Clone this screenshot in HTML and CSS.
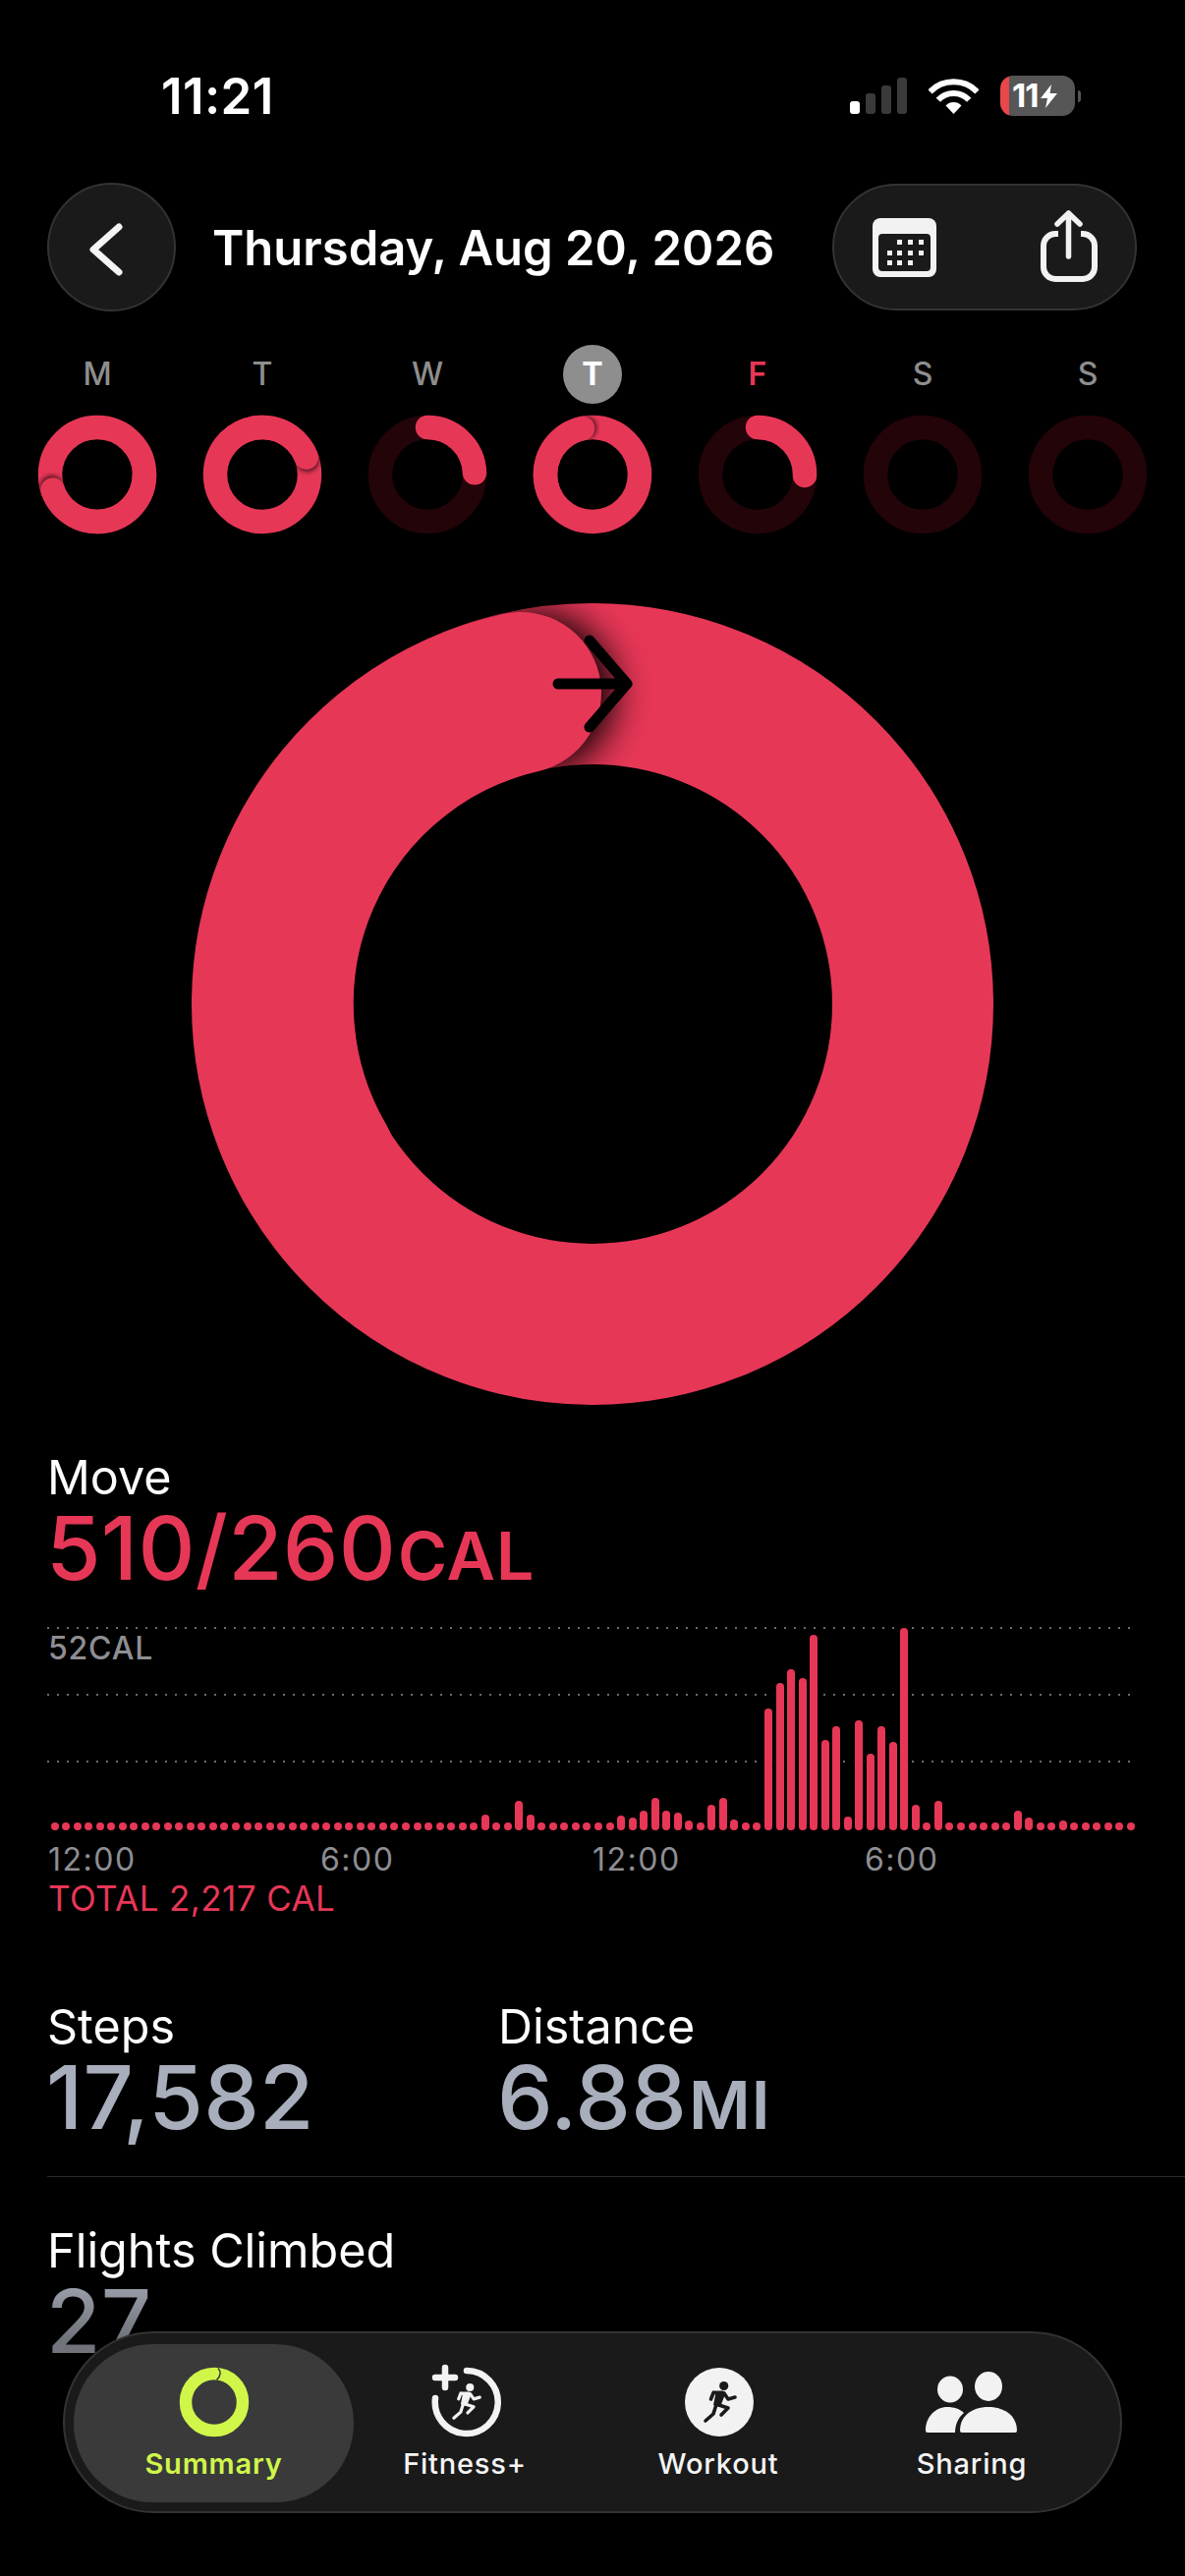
FILE: index.html
```html
<!DOCTYPE html>
<html lang="en">
<head>
<meta charset="utf-8">
<title>Activity Summary</title>
<link rel="stylesheet" href="styles.css">
</head>
<body>
<svg class="defs" width="0" height="0" aria-hidden="true">
  <defs>
    <clipPath id="smallClip"><path clip-rule="evenodd" d="M61 .75a60.25 60.25 0 1 0 0 120.5a60.25 60.25 0 1 0 0-120.5zM61 25a36 36 0 1 1 0 72a36 36 0 1 1 0-72z"/></clipPath>
    <clipPath id="bigClip"><path clip-rule="evenodd" d="M408 0a408 408 0 1 0 0 816a408 408 0 1 0 0-816zM408 164a244 244 0 1 1 0 488a244 244 0 1 1 0-488z"/></clipPath>
    <filter id="blurS" x="-50%" y="-50%" width="200%" height="200%"><feGaussianBlur stdDeviation="2"/></filter>
    <filter id="blurB" x="-50%" y="-50%" width="200%" height="200%"><feGaussianBlur stdDeviation="18"/></filter>
    <g id="runner">
      <circle class="head" cx="46.7" cy="28.5" r="4.6"/>
      <path class="torso" d="M35 33.5H46L48 37L43 50L36 48L38 38Z"/>
      <path class="limb" d="M36 35.5L33.5 42M47 36L51 42L58 40M40 47.5L51 51L44 58M38.5 49L36 57L28 64"/>
    </g>
  </defs>
</svg>

<div class="status">
  <span class="time">11:21</span>
  <div class="status-icons">
    <svg class="signal" width="58" height="37" viewBox="0 0 58 37">
      <rect class="on" x="0" y="24" width="10" height="13" rx="3"/>
      <rect class="off" x="16" y="16" width="10" height="21" rx="3"/>
      <rect class="off" x="32" y="8" width="10" height="29" rx="3"/>
      <rect class="off" x="48" y="0" width="10" height="37" rx="3"/>
    </svg>
    <svg class="wifi" width="51" height="37" viewBox="0 0 51 37">
      <path d="M1.5 14.5A33.500 33.500 0 0 1 49.500 14.500M9.800 22.800A21.500 21.500 0 0 1 41.200 22.800"/>
      <path class="wedge" d="M25.500 37L17.500 28.500A11 11 0 0 1 33.500 28.500Z"/>
    </svg>
    <div class="battery-wrap">
      <div class="battery">
        <span class="batt-num">11</span>
        <svg width="17" height="24" viewBox="0 0 17 24"><path class="bolt" d="M11 0L0 14H7L5 24L17 9H9.500Z"/></svg>
      </div>
      <span class="nub"></span>
    </div>
  </div>
</div>

<nav class="nav">
  <button class="back">
    <svg width="131" height="131" viewBox="0 0 131 131"><path class="stroke-icon back-chev" d="M73 45L47 68L73 91"/></svg>
  </button>
  <h1 class="title">Thursday, Aug 20, 2026</h1>
  <div class="actions">
    <svg class="cal" width="65" height="60" viewBox="0 0 65 60">
      <rect class="cal-body" width="65" height="60" rx="8"/>
      <rect class="cal-win" x="6" y="16" width="53" height="38" rx="4"/>
      <g class="cal-dots">
        <rect x="25" y="22" width="5" height="5"/><rect x="36" y="22" width="5" height="5"/><rect x="47" y="22" width="5" height="5"/>
        <rect x="15" y="33" width="5" height="5"/><rect x="25" y="33" width="5" height="5"/><rect x="36" y="33" width="5" height="5"/><rect x="47" y="33" width="5" height="5"/>
        <rect x="15" y="43" width="5" height="5"/><rect x="25" y="43" width="5" height="5"/><rect x="36" y="43" width="5" height="5"/>
      </g>
    </svg>
    <svg class="share" width="58" height="73" viewBox="0 0 58 73">
      <path class="share-box" d="M18 24H15A12 12 0 0 0 3 36V58A12 12 0 0 0 15 70H43A12 12 0 0 0 55 58V36A12 12 0 0 0 43 24H41"/>
      <path class="share-arrow" d="M28.500 47V3M17 14L28.500 3L40 14"/>
    </svg>
  </div>
</nav>

<div class="days">
  <div class="day"><span class="day-label">M</span>
    <svg class="mini" width="122" height="122" viewBox="0 0 122 122">
      <circle class="ring-full" cx="61" cy="61" r="48"/>
      <g clip-path="url(#smallClip)"><circle class="shade" cx="14.600" cy="73.800" r="12" filter="url(#blurS)"/></g>
      <path class="ring-arc" d="M109 61A48 48 0 0 1 15.600 76.600"/>
    </svg>
  </div>
  <div class="day"><span class="day-label">T</span>
    <svg class="mini" width="122" height="122" viewBox="0 0 122 122">
      <circle class="ring-full" cx="61" cy="61" r="48"/>
      <g clip-path="url(#smallClip)"><circle class="shade" cx="106.800" cy="46.300" r="12" filter="url(#blurS)"/></g>
      <path class="ring-arc" d="M19.400 37A48 48 0 0 1 105.700 43.500"/>
    </svg>
  </div>
  <div class="day"><span class="day-label">W</span>
    <svg class="mini" width="122" height="122" viewBox="0 0 122 122">
      <circle class="ring-dim" cx="61" cy="61" r="48"/>
      <path class="ring-arc" d="M61 13A48 48 0 0 1 109 59.300"/>
    </svg>
  </div>
  <div class="day"><span class="day-label today">T</span>
    <svg class="mini" width="122" height="122" viewBox="0 0 122 122">
      <circle class="ring-full" cx="61" cy="61" r="48"/>
      <g clip-path="url(#smallClip)"><circle class="shade" cx="53.500" cy="13.400" r="12" filter="url(#blurS)"/></g>
      <path class="ring-arc" d="M19.400 85A48 48 0 0 1 51 14"/>
    </svg>
  </div>
  <div class="day"><span class="day-label next">F</span>
    <svg class="mini" width="122" height="122" viewBox="0 0 122 122">
      <circle class="ring-dim" cx="61" cy="61" r="48"/>
      <path class="ring-arc" d="M61 13A48 48 0 0 1 109 62"/>
    </svg>
  </div>
  <div class="day"><span class="day-label">S</span>
    <svg class="mini" width="122" height="122" viewBox="0 0 122 122"><circle class="ring-dim" cx="61" cy="61" r="48"/></svg>
  </div>
  <div class="day"><span class="day-label">S</span>
    <svg class="mini" width="122" height="122" viewBox="0 0 122 122"><circle class="ring-dim" cx="61" cy="61" r="48"/></svg>
  </div>
</div>

<svg class="big-ring" width="816" height="816" viewBox="0 0 816 816">
  <circle class="big-full" cx="408" cy="408" r="326"/>
  <g clip-path="url(#bigClip)"><circle class="shade big-shade" cx="349" cy="91" r="82" filter="url(#blurB)"/></g>
  <path class="big-arc" d="M126.500 570.500A325 325 0 0 1 335 91"/>
  <path class="big-arrow" d="M373 82H443M405 38L443 82L405 126"/>
</svg>

<section class="move">
  <div class="label">Move</div>
  <div class="value move-value">510/260<span class="unit">CAL</span></div>
  <div class="chart">
    <div class="row first"><span class="peak">52CAL</span></div>
    <div class="row"></div>
    <div class="row"></div>
    <div class="bars">
      <i></i><i></i><i></i><i></i><i></i><i></i><i></i><i></i><i></i><i></i><i></i><i></i>
      <i></i><i></i><i></i><i></i><i></i><i></i><i></i><i></i><i></i><i></i><i></i><i></i>
      <i></i><i></i><i></i><i></i><i></i><i></i><i></i><i></i><i></i><i></i><i></i><i></i>
      <i></i><i></i><i style="height:16px"></i><i></i><i></i><i style="height:30px"></i><i style="height:16px"></i><i></i><i></i><i></i><i></i><i></i>
      <i></i><i></i><i style="height:15px"></i><i style="height:13px"></i><i style="height:20px"></i><i style="height:33px"></i><i style="height:20px"></i><i style="height:18px"></i><i style="height:10px"></i><i></i>
      <i style="height:26px"></i><i style="height:33px"></i><i style="height:11px"></i><i></i><i></i>
      <i style="height:124px"></i><i style="height:150px"></i><i style="height:164px"></i><i style="height:155px"></i><i style="height:199px"></i><i style="height:92px"></i><i style="height:106px"></i><i style="height:14px"></i><i style="height:112px"></i><i style="height:78px"></i><i style="height:106px"></i><i style="height:90px"></i><i style="height:206px"></i>
      <i style="height:26px"></i><i></i><i style="height:30px"></i><i></i><i></i><i></i><i></i><i></i><i></i>
      <i style="height:20px"></i><i style="height:13px"></i><i></i><i></i><i style="height:10px"></i><i></i><i></i><i></i><i></i><i></i><i></i>
    </div>
  </div>
  <div class="axis"><span>12:00</span><span>6:00</span><span>12:00</span><span>6:00</span></div>
  <div class="total">TOTAL 2,217 CAL</div>
</section>

<section class="stats">
  <div class="stat steps">
    <div class="label">Steps</div>
    <div class="value grey">17,582</div>
  </div>
  <div class="stat">
    <div class="label">Distance</div>
    <div class="value grey">6.88<span class="unit">MI</span></div>
  </div>
</section>
<hr class="divider">
<section class="flights">
  <div class="label">Flights Climbed</div>
  <div class="value fade">27</div>
</section>

<nav class="tabbar">
  <div class="tab active">
    <svg class="tab-icon" width="90" height="90" viewBox="0 0 90 90">
      <circle class="lime-ring" cx="45" cy="45" r="29"/>
      <path class="lime-notch" d="M49 10.500Q54 16 47.500 22.500"/>
    </svg>
    <span class="tab-label">Summary</span>
  </div>
  <div class="tab">
    <svg class="tab-icon" width="90" height="90" viewBox="0 0 90 90">
      <path class="fit-ring" d="M47 13A32 32 0 1 1 15 41M15 20H35M25 10V30"/>
      <use class="run-light" href="#runner" transform="translate(50.300 30) scale(.88) translate(-46.700 -28.500)"/>
    </svg>
    <span class="tab-label">Fitness+</span>
  </div>
  <div class="tab">
    <svg class="tab-icon" width="90" height="90" viewBox="0 0 90 90">
      <circle class="disc" cx="46" cy="45" r="35"/>
      <use class="run-dark" href="#runner" transform="translate(4 0)"/>
    </svg>
    <span class="tab-label">Workout</span>
  </div>
  <div class="tab">
    <svg class="tab-icon" width="90" height="90" viewBox="0 0 90 90">
      <ellipse class="disc" cx="23" cy="32" rx="13" ry="13.500"/>
      <ellipse class="disc" cx="62" cy="29" rx="14" ry="15"/>
      <path class="disc" d="M-2 74C-2 60 8 50 20 50C27 50 33 52 37 56C31 61 28 68 28 76H0Q-2 76 -2 74Z"/>
      <path class="disc" d="M33 74C33 60 44 50 62 50S91 60 91 74Q91 76 89 76H35Q33 76 33 74Z"/>
    </svg>
    <span class="tab-label">Sharing</span>
  </div>
</nav>
</body>
</html>
```
FILE: styles.css
```css
* { box-sizing: border-box; }
html, body { margin: 0; padding: 0; background: #000; }
body {
  width: 1206px;
  height: 2622px;
  overflow: hidden;
  position: relative;
  font-family: "Inter", "Liberation Sans", sans-serif;
  color: #fff;
}
.defs { position: absolute; }

/* status bar */
.status {
  height: 186px;
  padding: 68px 106px 0 164px;
  display: flex;
  justify-content: space-between;
  align-items: flex-start;
}
.time { font-size: 51px; line-height: 60px; font-weight: 600; letter-spacing: .4px; }
.status-icons { display: flex; align-items: center; gap: 22px; margin-top: 9px; height: 41px; }
.signal .on { fill: #fff; }
.signal .off { fill: #3a3a3a; }
.wifi path { fill: none; stroke: #fff; stroke-width: 6; }
.wifi .wedge { fill: #fff; stroke: none; }
.battery-wrap { display: flex; align-items: center; gap: 3px; }
.battery {
  width: 76px;
  height: 41px;
  border-radius: 13px;
  background: linear-gradient(90deg, #e8474c 9px, #565656 9px);
  display: flex;
  align-items: center;
  padding-left: 12px;
  gap: 3px;
}
.batt-num { font-size: 33px; line-height: 41px; font-weight: 700; letter-spacing: -1px; }
.bolt { fill: #fff; }
.nub { width: 3px; height: 12px; border-radius: 0 3px 3px 0; background: #565656; }

/* nav */
.nav { display: flex; align-items: center; height: 131px; padding: 0 49px 0 48px; }
.back {
  width: 131px;
  height: 131px;
  padding: 0;
  border-radius: 50%;
  background: #1a1a1a;
  border: 2px solid #333;
  flex: none;
}
.back svg { display: block; margin: -2px; }
.stroke-icon { fill: none; stroke: #f4f4f4; stroke-width: 7; stroke-linecap: round; stroke-linejoin: round; }
.title {
  margin: 3px 0 0 37px;
  flex: 1;
  font-size: 49px;
  line-height: 60px;
  font-weight: 600;
  letter-spacing: 0;
  white-space: nowrap;
}
.actions {
  width: 310px;
  height: 129px;
  border-radius: 65px;
  background: #1a1a1a;
  border: 2px solid #333;
  display: flex;
  align-items: center;
  padding-left: 39px;
  gap: 106px;
}
.cal-body { fill: #f2f2f2; }
.cal-win { fill: #1a1a1a; }
.cal-dots rect { fill: #f2f2f2; }
.share { margin-top: -2px; }
.share-box { fill: none; stroke: #f2f2f2; stroke-width: 6; stroke-linecap: butt; }
.share-arrow { fill: none; stroke: #f2f2f2; stroke-width: 5.500; stroke-linecap: round; stroke-linejoin: round; }

/* week */
.days {
  display: grid;
  grid-template-columns: repeat(7, 168px);
  margin-top: 34px;
  padding-left: 15px;
}
.day { display: flex; flex-direction: column; align-items: center; gap: 10.500px; }
.day-label {
  width: 60px;
  height: 60px;
  padding-bottom: 2px;
  border-radius: 50%;
  display: flex;
  align-items: center;
  justify-content: center;
  font-size: 32px;
  font-weight: 500;
  color: #8e8e8e;
}
.day-label.today { background: #8e8e8e; color: #fff; font-weight: 700; }
.day-label.next { color: #e73757; font-weight: 600; }
.mini { display: block; }
.ring-full, .ring-dim, .ring-arc { fill: none; stroke-width: 24.500; }
.ring-full { stroke: #e73757; }
.ring-dim { stroke: #230409; }
.ring-arc { stroke: #e73757; stroke-linecap: round; }
.shade { fill: #000; opacity: .6; }

/* big ring */
.big-ring { display: block; margin: 70.500px auto 0; }
.big-full { fill: none; stroke: #e73757; stroke-width: 164; }
.big-shade { opacity: .95; }
.big-arc { fill: none; stroke: #e73757; stroke-width: 164; stroke-linecap: round; }
.big-arrow { fill: none; stroke: #000; stroke-width: 11; stroke-linecap: round; stroke-linejoin: round; }

/* metrics */
.label { font-size: 48.500px; line-height: 58px; font-weight: 400; letter-spacing: 0; color: #fff; }
.value { font-size: 90px; line-height: 90px; font-weight: 500; letter-spacing: .2px; margin: -2px 0 0 -1px; white-space: nowrap; }
.unit { font-size: 68px; line-height: 1; font-weight: 600; letter-spacing: 1px; margin-left: 2px; }
.move { margin-top: 44.500px; padding-left: 48px; }
.move-value { color: #e73757; }
.grey { color: #a8aebb; }
.fade {
  background: linear-gradient(180deg, #a0a5b0 0%, #70737b 70%);
  -webkit-background-clip: text;
  background-clip: text;
  color: transparent;
}

.chart { position: relative; margin: 35.400px 0 0 0; width: 1103px; height: 207px; }
.row {
  height: 68px;
  background: repeating-linear-gradient(90deg, #6c6c6c 0 2px, transparent 2px 10px) top left / 100% 2px no-repeat;
}
.peak {
  display: block;
  padding: 3px 0 0 1px;
  font-size: 32px;
  line-height: 38px;
  font-weight: 500;
  letter-spacing: .8px;
  color: #8e8e93;
}
.bars {
  position: absolute;
  left: 3.500px;
  right: -4px;
  bottom: 0;
  display: flex;
  justify-content: space-between;
  align-items: flex-end;
}
.bars i {
  display: block;
  width: 8px;
  height: 8px;
  border-radius: 4px;
  background: #e73757;
  box-shadow: 0 0 0 1.800px #000;
}
.axis {
  display: grid;
  grid-template-columns: repeat(4, 277px);
  margin: 11.400px 0 0 1px;
  font-size: 32px;
  line-height: 38px;
  letter-spacing: 1.500px;
  color: #8e8e93;
}
.total {
  margin: 1px 0 0 1px;
  font-size: 35px;
  line-height: 38px;
  letter-spacing: .4px;
  color: #e73757;
}

.stats { display: flex; margin-top: 83px; padding-left: 48px; }
.stat { width: 459px; }
.divider { border: 0; height: 1px; background: #2a2a2a; margin: 35px 0 0 48px; }
.flights { margin-top: 45.500px; padding-left: 48px; }

/* tab bar */
.tabbar {
  position: absolute;
  left: 64px;
  top: 2373px;
  width: 1078px;
  height: 185px;
  border-radius: 92.500px;
  background: #1a1a1a;
  border: 2px solid #333;
  display: flex;
  align-items: flex-start;
  gap: 58px;
  padding: 11px 0 0 9px;
}
.tab {
  width: 200px;
  height: 161px;
  display: flex;
  flex-direction: column;
  align-items: center;
  padding-top: 14px;
}
.tab.active { width: 285px; margin-right: -45px; border-radius: 80px; background: #3a3a3a; }
.tab-icon { display: block; overflow: visible; flex: none; }
.tab-label { font-size: 29px; line-height: 34px; font-weight: 500; letter-spacing: .8px; margin-top: .500px; color: #f4f4f4; }
.active .tab-label { color: #d0f64a; font-weight: 600; }
.lime-ring { fill: none; stroke: #d0f64a; stroke-width: 12.500; }
.lime-notch { fill: none; stroke: #3a3a3a; stroke-width: 1.500; }
.fit-ring { fill: none; stroke: #f2f2f2; stroke-width: 6.500; stroke-linecap: round; }
.disc { fill: #f2f2f2; }
.limb { fill: none; stroke-width: 3.600; stroke-linecap: round; stroke-linejoin: round; }
.run-light { color: #f2f2f2; }
.run-dark { color: #1a1a1a; }
.head, .torso { fill: currentColor; }
.limb { stroke: currentColor; }
```
